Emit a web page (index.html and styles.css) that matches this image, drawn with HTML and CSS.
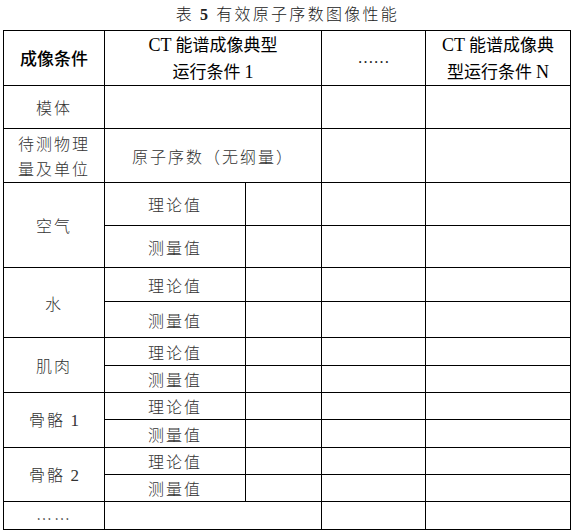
FILE: index.html
```html
<!DOCTYPE html>
<html lang="zh-CN">
<head>
<meta charset="utf-8">
<title>表 5 有效原子序数图像性能</title>
<link rel="stylesheet" href="styles.css">
</head>
<body>
<div class="page">
  <div class="caption">表 <span class="num">5</span> 有效原子序数图像性能</div>
  <table class="perf">
    <colgroup>
      <col class="c1"><col class="c2a"><col class="c2b"><col class="c3"><col class="c4">
    </colgroup>
    <tr class="r-head">
      <th class="strong">成像条件</th>
      <th colspan="2"><span class="lat">CT</span> 能谱成像典型<br>运行条件 <span class="lat">1</span></th>
      <th class="dots">……</th>
      <th><span class="lat">CT</span> 能谱成像典<br>型运行条件 <span class="lat">N</span></th>
    </tr>
    <tr class="r-43">
      <td>模体</td><td colspan="2"></td><td></td><td></td>
    </tr>
    <tr class="r-54">
      <td class="two">待测物理<br>量及单位</td><td colspan="2">原子序数（无纲量）</td><td></td><td></td>
    </tr>
    <tr class="r-43">
      <td rowspan="2">空气</td><td>理论值</td><td></td><td></td><td></td>
    </tr>
    <tr class="r-42">
      <td>测量值</td><td></td><td></td><td></td>
    </tr>
    <tr class="r-34">
      <td rowspan="2">水</td><td>理论值</td><td></td><td></td><td></td>
    </tr>
    <tr class="r-36">
      <td>测量值</td><td></td><td></td><td></td>
    </tr>
    <tr class="r-28">
      <td rowspan="2">肌肉</td><td>理论值</td><td></td><td></td><td></td>
    </tr>
    <tr class="r-27">
      <td>测量值</td><td></td><td></td><td></td>
    </tr>
    <tr class="r-27">
      <td rowspan="2">骨骼 <span class="lat">1</span></td><td>理论值</td><td></td><td></td><td></td>
    </tr>
    <tr class="r-28">
      <td>测量值</td><td></td><td></td><td></td>
    </tr>
    <tr class="r-27">
      <td rowspan="2">骨骼 <span class="lat">2</span></td><td>理论值</td><td></td><td></td><td></td>
    </tr>
    <tr class="r-27">
      <td>测量值</td><td></td><td></td><td></td>
    </tr>
    <tr class="r-28">
      <td class="last">……</td><td colspan="2"></td><td></td><td></td>
    </tr>
  </table>
</div>
</body>
</html>
```
FILE: styles.css
```css
html, body {
  margin: 0;
  padding: 0;
  background: #ffffff;
}

body {
  font-family: "Noto Sans CJK SC", "Liberation Serif", sans-serif;
  color: #000;
}

.page {
  padding: 0 3px;
}

.caption {
  height: 30px;
  line-height: 26px;
  text-align: center;
  font-size: 16px;
  font-weight: 300;
  letter-spacing: 2.3px;
  color: #222;
  padding-left: 2px;
}

.lat {
  font-family: "Liberation Serif", serif;
  letter-spacing: 0;
}

.caption .num {
  font-family: "Liberation Serif", serif;
  font-weight: bold;
}

.perf {
  border-collapse: collapse;
  table-layout: fixed;
  width: 567px;
}

.c1 { width: 101px; }
.c2a { width: 141px; }
.c2b { width: 76px; }
.c3 { width: 104px; }
.c4 { width: 145px; }

.perf th,
.perf td {
  border: 1px solid #000;
  padding: 0;
  text-align: center;
  vertical-align: middle;
  overflow: hidden;
}

.perf th {
  font-weight: normal;
  font-size: 17px;
  line-height: 26px;
  color: #000;
}

.perf th.strong {
  font-weight: 500;
}

.perf th .lat {
  font-size: 18px;
}

.perf td {
  font-size: 16px;
  font-weight: 300;
  line-height: 20px;
  letter-spacing: 2px;
  color: #333;
}

.perf td .lat {
  font-size: 17px;
}

.perf td.two {
  line-height: 25px;
}

.perf td.last {
  padding-top: 4px;
}

.perf th.dots {
  font-family: "Liberation Serif", serif;
  font-size: 16px;
  color: #222;
}

.r-head { height: 53px; }
.r-54 { height: 54px; }
.r-43 { height: 43px; }
.r-42 { height: 42px; }
.r-36 { height: 36px; }
.r-34 { height: 34px; }
.r-28 { height: 28px; }
.r-27 { height: 27px; }
```
